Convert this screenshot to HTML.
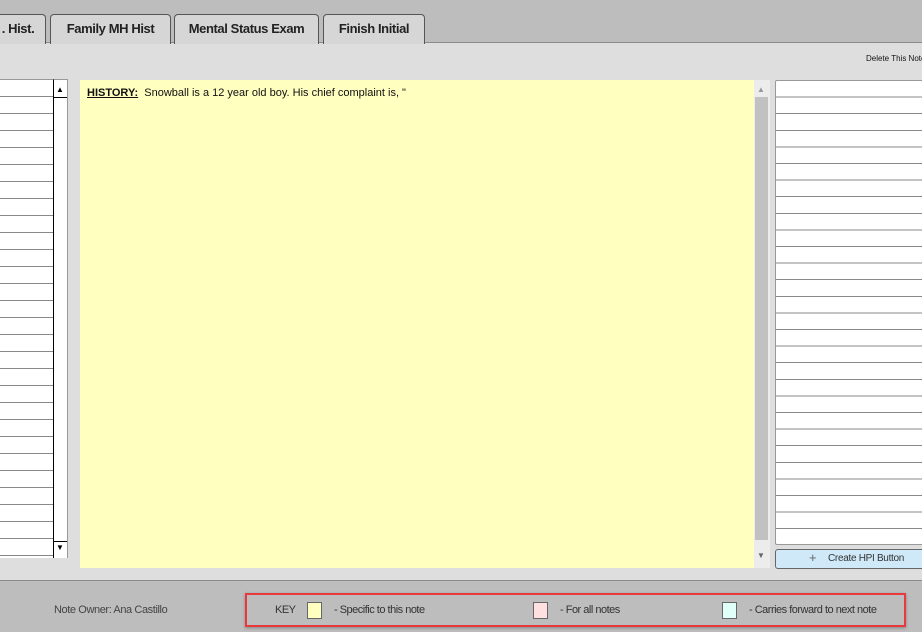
<!DOCTYPE html>
<html><head><style>
*{margin:0;padding:0;box-sizing:border-box}
body{width:922px;height:632px;overflow:hidden;background:#dedede;font-family:"Liberation Sans",sans-serif;position:relative}
.top{position:absolute;left:0;top:0;width:922px;height:43px;background:#bdbdbd;border-bottom:1px solid #8a8a8a}
.tab{position:absolute;top:14px;height:30px;background:#d6d6d6;border:1px solid #555;border-bottom:none;border-radius:4px 4px 0 0;font-size:13px;font-weight:bold;color:#222;text-align:center;line-height:28px;letter-spacing:-0.4px}
.abs{position:absolute}
.bottom{position:absolute;left:0;top:580px;width:922px;height:52px;background:#bdbdbd;border-top:1px solid #8a8a8a}
.sw{position:absolute;top:602px;width:15px;height:17px;border:1px solid #666}
.lbl{position:absolute;top:604px;font-size:11px;color:#333;letter-spacing:-0.5px;white-space:nowrap}
</style></head><body>
<div class="top"></div>
<div class="tab" style="left:-10px;width:56px">. Hist.</div>
<div class="tab" style="left:50px;width:121px">Family MH Hist</div>
<div class="tab" style="left:174px;width:145px">Mental Status Exam</div>
<div class="tab" style="left:323px;width:102px">Finish Initial</div>
<div class="abs" style="left:866px;top:54px;font-size:8px;color:#111;white-space:nowrap">Delete This Note</div>

<div class="abs" style="left:0;top:79px;width:54px;height:479px;border-top:1px solid #999;background-image:repeating-linear-gradient(#fff 0,#fff 15.9px,#888 15.9px,#888 17px)"></div>
<div class="abs" style="left:53px;top:79px;width:15px;height:479px;background:#fff;border-left:1px solid #000;border-right:1px solid #999;border-top:1px solid #999"></div>
<div class="abs" style="left:54px;top:97px;width:13px;height:1px;background:#000"></div>
<div class="abs" style="left:56px;top:85px;font-size:8px">▲</div>
<div class="abs" style="left:54px;top:541px;width:13px;height:1px;background:#000"></div>
<div class="abs" style="left:56px;top:543px;font-size:8px">▼</div>

<div class="abs" style="left:80px;top:80px;width:674px;height:488px;background:#ffffc0"></div>
<div class="abs" style="left:87px;top:87px;font-size:11px;color:#111"><b style="text-decoration:underline">HISTORY:</b>&nbsp; Snowball is a 12 year old boy. His chief complaint is, "</div>
<div class="abs" style="left:754px;top:80px;width:16px;height:488px;background:#ececec"></div>
<div class="abs" style="left:755px;top:97px;width:13px;height:443px;background:#c1c1c1"></div>
<div class="abs" style="left:757px;top:85px;font-size:8px;color:#999">▲</div>
<div class="abs" style="left:757px;top:551px;font-size:8px;color:#666">▼</div>

<div class="abs" style="left:775px;top:80px;width:147px;height:465px;border:1px solid #999;border-right:none;border-radius:2px 0 0 2px;background-image:repeating-linear-gradient(#fff 0,#fff 15.6px,#888 15.6px,#888 16.6px)"></div>
<div class="abs" style="left:775px;top:549px;width:150px;height:20px;background:#cfe9f8;border:1px solid #666;border-radius:3px;font-size:10px;color:#333;line-height:18px;letter-spacing:-0.3px"><span style="position:absolute;left:33px;top:-1px;font-size:13px;color:#666">+</span><span style="position:absolute;left:52px;white-space:nowrap">Create HPI Button</span></div>

<div class="bottom"></div>
<div class="abs" style="left:54px;top:604px;font-size:11px;color:#444;letter-spacing:-0.4px;white-space:nowrap">Note Owner: Ana Castillo</div>
<div class="abs" style="left:245px;top:593px;width:661px;height:34px;border:2px solid #e8393f;box-shadow:0 1px 3px rgba(0,0,0,.3)"></div>
<div class="lbl" style="left:275px">KEY</div>
<div class="sw" style="left:307px;background:#ffffc0"></div>
<div class="lbl" style="left:334px">- Specific to this note</div>
<div class="sw" style="left:533px;background:#ffe0e0"></div>
<div class="lbl" style="left:560px">- For all notes</div>
<div class="sw" style="left:722px;background:#e0fff8"></div>
<div class="lbl" style="left:749px">- Carries forward to next note</div>
</body></html>
